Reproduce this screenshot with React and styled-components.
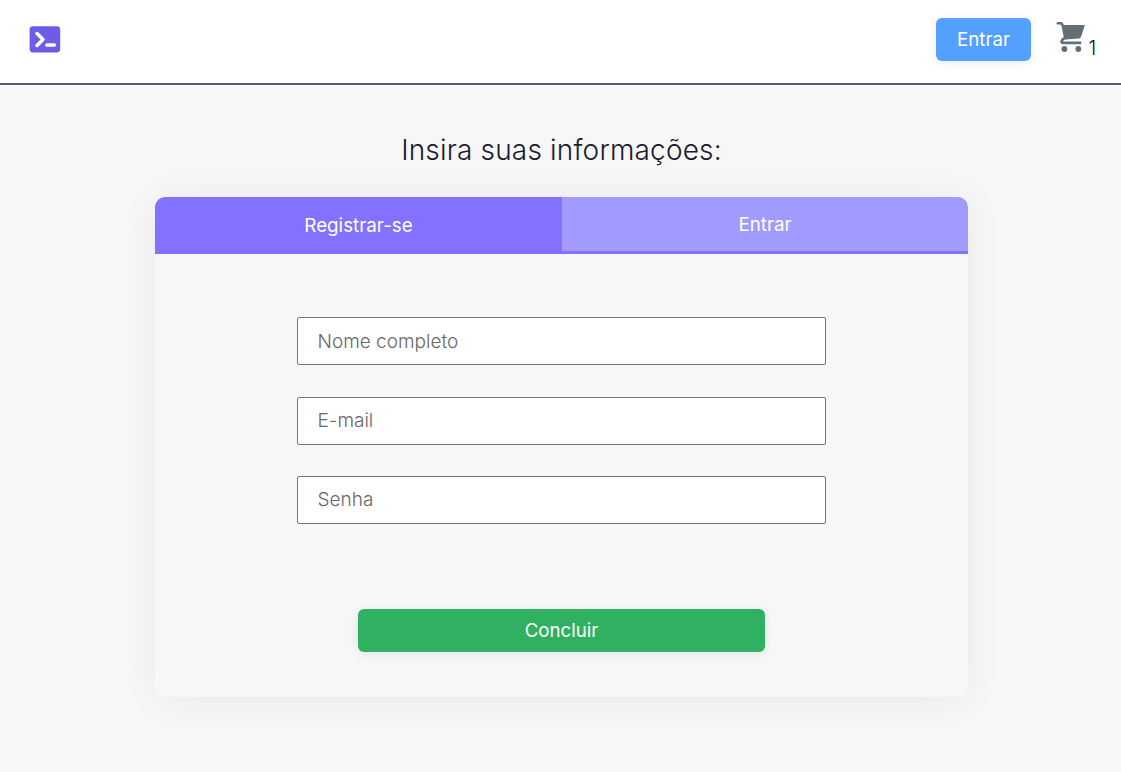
import React from 'react';
import styled, { createGlobalStyle } from 'styled-components';

const GlobalStyle = createGlobalStyle`
  *, *::before, *::after { box-sizing: border-box; }
  body {
    margin: 0;
    min-height: 100vh;
    background: #f7f7f7;
    color: #1a1a2e;
    font-family: Inter, "Liberation Sans", sans-serif;
    font-weight: 300;
    font-size: 19px;
  }
`;

const Header = styled.header`
  display: flex;
  justify-content: space-between;
  height: 85px;
  padding: 18px 24px 0 29px;
  background: #fff;
  border-bottom: 2px solid #5f5478;
`;

const Logo = styled.svg`
  display: block;
  width: 32px;
  height: 27px;
  margin-top: 8px;
`;

const Actions = styled.div`
  display: flex;
  align-items: flex-start;
`;

const Button = styled.button`
  display: block;
  width: ${(p) => p.$width};
  height: 43px;
  padding: 0;
  border: 0;
  border-radius: 6px;
  background: ${(p) => p.$color};
  color: #fff;
  font: 400 18.7px/43px Inter, sans-serif;
  box-shadow: 0 2px 12px rgba(0, 0, 0, 0.08);
`;

const Cart = styled.div`
  display: flex;
  width: 41px;
  margin: 2px 0 0 25px;
`;

const CartIcon = styled.svg`
  display: block;
  flex: none;
  width: 30px;
  height: 33px;
`;

const CartCount = styled.span`
  margin: 17px 0 0 2.6px;
  line-height: 22px;
  font-weight: 300;
  font-size: 19.5px;
  color: #111;
`;

const Main = styled.main`
  display: flex;
  flex-direction: column;
  align-items: center;
  padding-left: 2px;
`;

const Title = styled.h1`
  margin: 47px 0 29px;
  font-size: 28px;
  line-height: 36px;
  font-weight: 300;
  letter-spacing: 0.18px;
`;

const Card = styled.section`
  width: 813px;
  height: 500px;
  border-radius: 10px;
  background: #f7f7f7;
  box-shadow: 0 2px 40px rgba(0, 0, 0, 0.06);
`;

const Tabs = styled.div`
  display: grid;
  grid-template-columns: 407px 406px;
  height: 57px;
  border-radius: 10px 10px 0 0;
  overflow: hidden;
`;

const Tab = styled.button`
  padding: ${(p) => (p.$active ? '0' : '1px')} 0 0;
  border: 0;
  border-bottom: ${(p) => (p.$active ? '0' : '3px solid #8371ff')};
  background: ${(p) => (p.$active ? '#8371ff' : '#a29bfe')};
  color: #fff;
  font: 400 18.8px/24px Inter, sans-serif;
`;

const Form = styled.form`
  display: flex;
  flex-direction: column;
  align-items: center;
  padding-top: 63px;
`;

const Field = styled.input`
  width: 529px;
  height: 48px;
  margin: 0 0 ${(p) => p.$gap};
  padding: 0 20px ${(p) => p.$lift || '0'} 19.5px;
  border: 1px solid #767676;
  border-radius: 2px;
  background: #fff;
  font: 300 19px Inter, sans-serif;
  &::placeholder { color: #686868; }
`;

export default function App() {
  return (
    <>
      <GlobalStyle />
      <Header>
        <Logo viewBox="0 0 32 27">
          <rect x="0.6" y="0.3" width="30.6" height="26.2" rx="3.4" fill="#6c5ce7" />
          <path d="M8 7.5l6 6-6 6M17.8 19h7.6" fill="none" stroke="#fff" strokeWidth="3.5" strokeLinecap="round" strokeLinejoin="round" />
        </Logo>
        <Actions>
          <Button $width="95px" $color="#54a0ff">Entrar</Button>
          <Cart>
            <CartIcon viewBox="0 0 30 33" fill="#636e72">
              <path d="M1.8 3.2H5.4L6.9 6 9.2 17.6 6.2 19.9Q4.2 22.8 7.6 22.9H24.2" fill="none" stroke="#636e72" strokeWidth="2.6" strokeLinecap="round" strokeLinejoin="round" />
              <path d="M6.4 4.9H27.8Q29 4.9 28.6 6.1L25.1 16.6Q24.6 18.4 22.8 18.6L9.2 19.5Z" />
              <circle cx="8.4" cy="29" r="2.9" />
              <circle cx="22.3" cy="29" r="2.9" />
            </CartIcon>
            <CartCount>1</CartCount>
          </Cart>
        </Actions>
      </Header>
      <Main>
        <Title>Insira suas informações:</Title>
        <Card>
          <Tabs>
            <Tab $active>Registrar-se</Tab>
            <Tab>Entrar</Tab>
          </Tabs>
          <Form>
            <Field $gap="32px" placeholder="Nome completo" />
            <Field $gap="31px" $lift="2px" placeholder="E-mail" />
            <Field $gap="85px" $lift="2px" type="password" placeholder="Senha" />
            <Button type="button" $width="407px" $color="#30b161">Concluir</Button>
          </Form>
        </Card>
      </Main>
    </>
  );
}
